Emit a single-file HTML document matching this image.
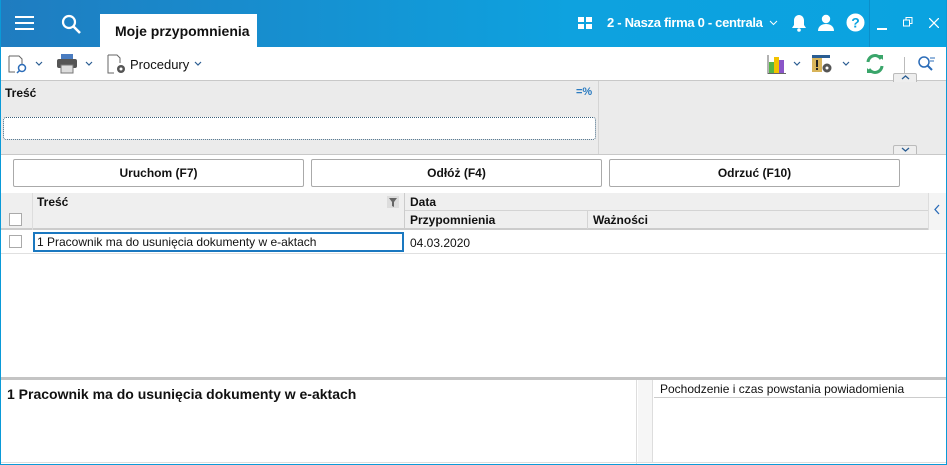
<!DOCTYPE html>
<html><head><meta charset="utf-8"><style>
*{box-sizing:border-box;margin:0;padding:0}
body{width:947px;height:465px;overflow:hidden;font-family:"Liberation Sans",sans-serif;font-size:12px;color:#111;background:#fff;position:relative}
.abs{position:absolute}
.win{position:absolute;left:0;top:0;width:947px;height:465px;border:1px solid #0a9ad8;border-top:none}
.btn{position:absolute;top:159px;height:28px;border:1px solid #aaa;border-radius:2px;background:#fff;font-weight:bold;text-align:center;line-height:26px;font-size:12px}
</style></head><body>
<div class="abs" style="left:0;top:0;width:947px;height:47px;background:linear-gradient(90deg,#1f7cc0,#0ea2df 60%,#0aa3e0)"></div>
<div class="abs" style="left:15px;top:16px;width:19px;height:2px;background:#fff"></div>
<div class="abs" style="left:15px;top:22px;width:19px;height:2px;background:#fff"></div>
<div class="abs" style="left:15px;top:28px;width:19px;height:2px;background:#fff"></div>
<svg class="abs" style="left:60px;top:13px" width="22" height="22"><circle cx="9" cy="9" r="6" stroke="#fff" stroke-width="2.2" fill="none"/><line x1="13.5" y1="13.5" x2="20" y2="20" stroke="#fff" stroke-width="2.6"/></svg>
<div class="abs" style="left:100px;top:14px;width:157px;height:33px;background:#fff;font-weight:bold;font-size:14px;line-height:34px;padding-left:15px">Moje przypomnienia</div>
<svg class="abs" style="left:578px;top:17px" width="14" height="14"><rect x="0" y="0" width="6" height="5" fill="#fff"/><rect x="8" y="0" width="6" height="5" fill="#fff"/><rect x="0" y="7" width="6" height="5" fill="#fff"/><rect x="8" y="7" width="6" height="5" fill="#fff"/></svg>
<div class="abs" style="left:607px;top:15px;color:#fff;font-weight:bold;font-size:13px;letter-spacing:-0.3px">2 - Nasza firma 0 - centrala</div>
<svg class="abs" style="left:769px;top:20px" width="9" height="6"><path d="M1 1l3.5 3.5L8 1" stroke="#fff" fill="none"/></svg>
<svg class="abs" style="left:791px;top:14px" width="16" height="18"><path d="M8 1c-3 0-5 2.5-5 5.5V11L1 14h14l-2-3V6.5C13 3.5 11 1 8 1z" fill="#fff"/><circle cx="8" cy="16" r="1.8" fill="#fff"/></svg>
<svg class="abs" style="left:817px;top:14px" width="18" height="17"><circle cx="9" cy="5" r="4.2" fill="#fff"/><path d="M1 17c0-5 4-7 8-7s8 2 8 7z" fill="#fff"/></svg>
<svg class="abs" style="left:846px;top:13px" width="19" height="19"><circle cx="9.5" cy="9.5" r="9" fill="#fff"/><text x="9.5" y="14.5" font-size="14" font-weight="bold" text-anchor="middle" fill="#0aa3e0" font-family="Liberation Sans">?</text></svg>
<div class="abs" style="left:869px;top:0;width:1px;height:47px;background:#0b8fcb"></div>
<div class="abs" style="left:877px;top:28px;width:10px;height:1.5px;background:#fff"></div>
<svg class="abs" style="left:903px;top:17px" width="10" height="10"><rect x="0.5" y="3" width="6" height="6" stroke="#fff" fill="none"/><path d="M3 3V0.5h6v6H6.5" stroke="#fff" fill="none"/></svg>
<svg class="abs" style="left:929px;top:18px" width="10" height="10"><path d="M0 0L10 10M10 0L0 10" stroke="#fff" stroke-width="1.3"/></svg>
<!-- toolbar -->
<svg class="abs" style="left:8px;top:55px" width="20" height="20"><path d="M1 1h10l3 3v6" stroke="#666" fill="none"/><path d="M1 1v16h6" stroke="#666" fill="none"/><circle cx="14" cy="13" r="3.5" stroke="#2b6cb8" stroke-width="1.5" fill="none"/><line x1="11.5" y1="15.5" x2="9" y2="18" stroke="#2b6cb8" stroke-width="1.5"/></svg>
<svg class="abs" style="left:35px;top:61px" width="8" height="5"><path d="M1 1l3 3 3-3" stroke="#2a5d92" stroke-width="1.2" fill="none"/></svg>
<svg class="abs" style="left:56px;top:54px" width="22" height="20"><rect x="5" y="0" width="12" height="5" fill="#4a7cc0"/><rect x="1" y="5" width="20" height="9" rx="2" fill="#555"/><rect x="5" y="11" width="12" height="8" fill="#ddd" stroke="#777"/></svg>
<svg class="abs" style="left:85px;top:61px" width="8" height="5"><path d="M1 1l3 3 3-3" stroke="#2a5d92" stroke-width="1.2" fill="none"/></svg>
<svg class="abs" style="left:107px;top:54px" width="20" height="21"><path d="M1 1h9l3 3v5M1 1v18h6" stroke="#666" fill="none"/><circle cx="14" cy="15" r="4" fill="#555"/><circle cx="14" cy="15" r="1.5" fill="#fff"/></svg>
<div class="abs" style="left:130px;top:57px;font-size:13px">Procedury</div>
<svg class="abs" style="left:194px;top:61px" width="8" height="5"><path d="M1 1l3 3 3-3" stroke="#2a5d92" stroke-width="1.2" fill="none"/></svg>
<svg class="abs" style="left:767px;top:55px" width="20" height="19"><rect x="2" y="7" width="5" height="11" fill="#55b548"/><rect x="7" y="2" width="5" height="16" fill="#f2c200"/><rect x="12" y="5" width="5" height="13" fill="#8a55c8"/><path d="M1 0v18.5h18" stroke="#666" fill="none"/></svg>
<svg class="abs" style="left:793px;top:61px" width="8" height="5"><path d="M1 1l3 3 3-3" stroke="#2a5d92" stroke-width="1.2" fill="none"/></svg>
<svg class="abs" style="left:812px;top:55px" width="22" height="20"><rect x="0" y="0" width="18" height="3" fill="#2a5d92"/><rect x="0" y="3" width="10" height="14" fill="#d8b45a"/><rect x="4" y="5" width="2" height="7" fill="#222"/><rect x="4" y="13" width="2" height="2" fill="#222"/><circle cx="15" cy="13" r="4.5" fill="#555"/><circle cx="15" cy="13" r="1.5" fill="#fff"/></svg>
<svg class="abs" style="left:842px;top:61px" width="8" height="5"><path d="M1 1l3 3 3-3" stroke="#2a5d92" stroke-width="1.2" fill="none"/></svg>
<svg class="abs" style="left:864px;top:53px" width="22" height="22"><path d="M4 9a7 7 0 0 1 13-3" stroke="#3aa56a" stroke-width="3" fill="none"/><path d="M14 2l5 0 0 5z" fill="#3aa56a"/><path d="M18 13a7 7 0 0 1-13 3" stroke="#3aa56a" stroke-width="3" fill="none"/><path d="M8 20l-5 0 0-5z" fill="#3aa56a"/></svg>
<div class="abs" style="left:904px;top:57px;width:1px;height:16px;background:#bbb"></div>
<svg class="abs" style="left:917px;top:55px" width="20" height="18"><circle cx="7" cy="7" r="5" stroke="#2b6cb8" stroke-width="1.5" fill="none"/><line x1="10.5" y1="10.5" x2="15" y2="15" stroke="#2b6cb8" stroke-width="2"/><path d="M13 3h5M13 6h4" stroke="#2b6cb8"/></svg>
<!-- filter -->
<div class="abs" style="left:0;top:80px;width:947px;height:75px;background:#ebebeb;border-top:1px solid #c8c8c8;border-bottom:1px solid #c8c8c8"></div>
<div class="abs" style="left:893px;top:73px;width:24px;height:9px;border:1px solid #bbb;border-bottom:none;background:#eee;border-radius:2px 2px 0 0"></div>
<svg class="abs" style="left:901px;top:75px" width="9" height="5"><path d="M1 4l3.5-3L8 4" stroke="#2a5d92" stroke-width="1.3" fill="none"/></svg>
<div class="abs" style="left:598px;top:81px;width:1px;height:73px;background:#d4d4d4"></div>
<div class="abs" style="left:5px;top:86px;font-weight:bold;font-size:12px">Treść</div>
<div class="abs" style="left:576px;top:86px;color:#2b7bc0;font-size:11px;font-weight:bold">=%</div>
<div class="abs" style="left:3px;top:117px;width:593px;height:23px;background:#fff;border:1px dotted #3a5f7a;border-radius:3px"></div>
<div class="abs" style="left:893px;top:145px;width:24px;height:9px;border:1px solid #bbb;border-bottom:none;background:#eee;border-radius:2px 2px 0 0"></div>
<svg class="abs" style="left:901px;top:147px" width="9" height="5"><path d="M1 1l3.5 3L8 1" stroke="#2a5d92" stroke-width="1.3" fill="none"/></svg>
<!-- buttons -->
<div class="btn" style="left:13px;width:291px">Uruchom (F7)</div>
<div class="btn" style="left:311px;width:291px">Odłóż (F4)</div>
<div class="btn" style="left:609px;width:291px">Odrzuć (F10)</div>
<!-- grid header -->
<div class="abs" style="left:1px;top:193px;width:927px;height:37px;background:#efefef;border-bottom:2px solid #ccc"></div>
<div class="abs" style="left:32px;top:193px;width:1px;height:37px;background:#ddd"></div>
<div class="abs" style="left:404px;top:193px;width:1px;height:37px;background:#ccc"></div>
<div class="abs" style="left:405px;top:210px;width:523px;height:1px;background:#d4d4d4"></div>
<div class="abs" style="left:587px;top:211px;width:1px;height:18px;background:#d4d4d4"></div>
<div class="abs" style="left:928px;top:193px;width:18px;height:37px;background:#f4f4f4;border-left:1px solid #ddd"></div>
<svg class="abs" style="left:934px;top:204px" width="6" height="11"><path d="M5 1L1 5.5 5 10" stroke="#2b6cb8" stroke-width="1.3" fill="none"/></svg>
<div class="abs" style="left:37px;top:195px;font-weight:bold;font-size:12px">Treść</div>
<svg class="abs" style="left:387px;top:196px" width="12" height="12"><rect width="12" height="12" fill="#ddd"/><path d="M2 2h8L7 6v5L5 10V6z" fill="#666"/></svg>
<div class="abs" style="left:410px;top:195px;font-weight:bold">Data</div>
<div class="abs" style="left:410px;top:213px;font-weight:bold">Przypomnienia</div>
<div class="abs" style="left:593px;top:213px;font-weight:bold">Ważności</div>
<div class="abs" style="left:9px;top:213px;width:13px;height:13px;border:1px solid #aaa;background:#fff"></div>
<!-- row -->
<div class="abs" style="left:9px;top:235px;width:13px;height:13px;border:1px solid #aaa;background:#fff"></div>
<div class="abs" style="left:33px;top:232px;width:371px;height:20px;border:2px solid #1a78c0;padding-left:2px;line-height:16px">1 Pracownik ma do usunięcia dokumenty w e-aktach</div>
<div class="abs" style="left:410px;top:236px">04.03.2020</div>
<div class="abs" style="left:1px;top:253px;width:945px;height:1px;background:#e0e0e0"></div>
<!-- bottom -->
<div class="abs" style="left:1px;top:377px;width:945px;height:3px;background:#c4c4c4"></div>
<div class="abs" style="left:7px;top:386px;font-weight:bold;font-size:14px">1 Pracownik ma do usunięcia dokumenty w e-aktach</div>
<div class="abs" style="left:636px;top:380px;width:1px;height:85px;background:#ddd"></div>
<div class="abs" style="left:638px;top:380px;width:15px;height:83px;background:#f6f6f6;border-right:1px solid #ddd"></div>
<div class="abs" style="left:660px;top:382px;font-size:12px">Pochodzenie i czas powstania powiadomienia</div>
<div class="abs" style="left:654px;top:397px;width:292px;height:1px;background:#ccc"></div>
<div class="abs" style="left:1px;top:462px;width:945px;height:1px;background:#ddd"></div>
<div class="win"></div>
</body></html>
